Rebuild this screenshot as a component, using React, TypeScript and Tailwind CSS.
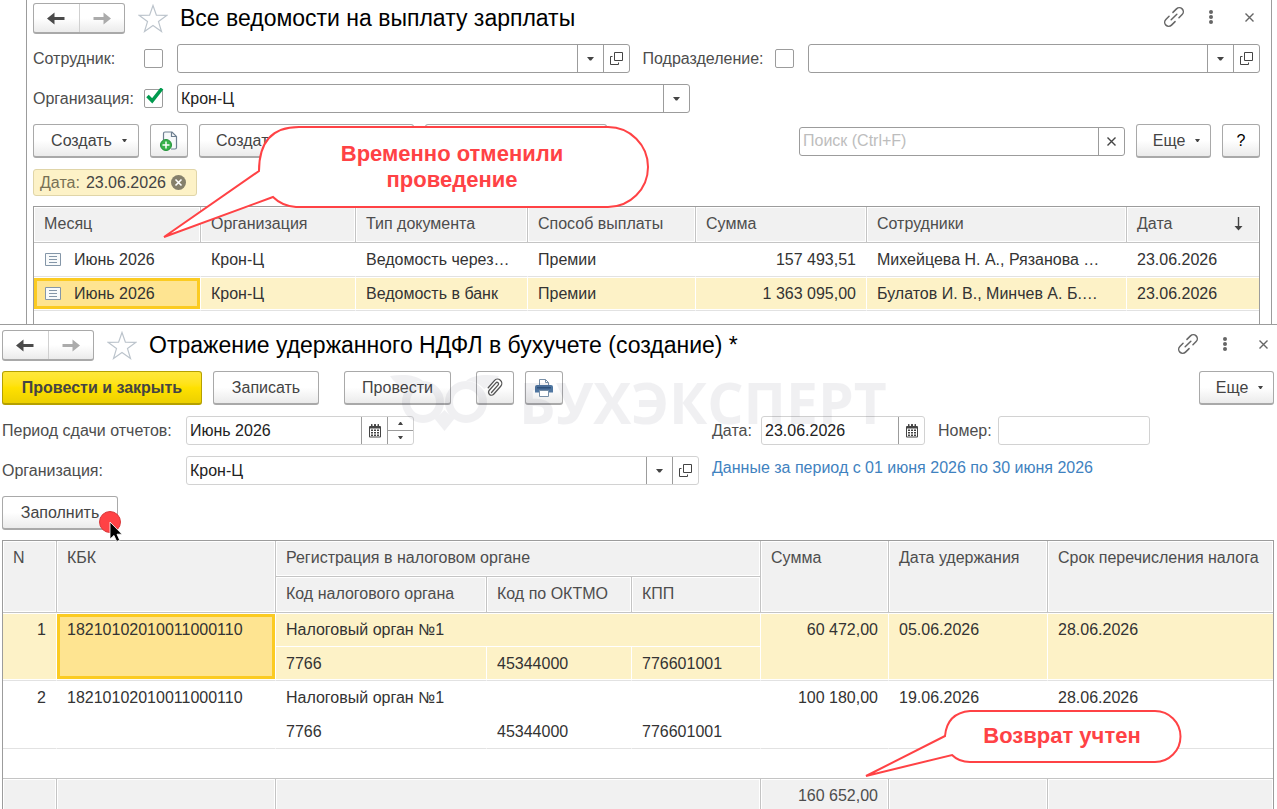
import { ReactNode } from 'react'
import clsx from 'clsx'

const BUTTON =
  'flex items-center justify-center rounded-[3px] border border-[#a9a9a9] border-b-2 bg-gradient-to-b from-white from-50% to-[#ebebeb] text-[#444]'

const HEAD =
  'h-9 overflow-hidden whitespace-nowrap border-r border-b border-[#c4c4c4] bg-[#f1f1f1] p-0 px-[10px] text-left align-top font-normal leading-[34px] text-[#4d4d4d] shadow-[inset_0_0_0_1px_#fff]'

const CELL =
  'h-[34px] overflow-hidden whitespace-nowrap border-r border-r-white border-b border-b-[#e2e2e2] p-0 px-[10px] align-top leading-[33px]'

const MARKED = 'bg-[#fdf2c7] shadow-[inset_0_1px_#fff,inset_0_-1px_#fff]'
const FOCUSED =
  'bg-[#fee491] shadow-[inset_0_1px_#fff,inset_0_-1px_#fff,inset_3px_0_#fbcb22,inset_-3px_0_#fbcb22,inset_0_4px_#fbcb22,inset_0_-4px_#fbcb22]'

function Caret() {
  return (
    <svg width="7" height="4" viewBox="0 0 7 4" fill="#444">
      <path d="M0 0h7L4.2 3.6H2.8z" />
    </svg>
  )
}

function SmallCaret({ up }: { up?: boolean }) {
  return (
    <svg width="5" height="3" viewBox="0 0 5 3" fill="#444">
      <path d={up ? 'M0 3h5L3 0H2z' : 'M0 0h5L3 3H2z'} />
    </svg>
  )
}

function OpenIcon() {
  return (
    <svg width="13" height="13" viewBox="0 0 13 13" fill="none" stroke="#444">
      <path d="M4.5 0.5h8v8h-8zM2.5 4.5h-2v8h8v-2" />
    </svg>
  )
}

function CalendarIcon() {
  return (
    <svg width="12" height="14" viewBox="0 0 12 14" fill="#444">
      <path d="M1 2h1V.5a.5.5 0 0 1 .5-.5h.5a.5.5 0 0 1 .5.5V2h1.500V.5a.5.5 0 0 1 .5-.5h1a.5.5 0 0 1 .5.5V2H8.500V.5A.5.5 0 0 1 9 0h.5a.5.5 0 0 1 .5.5V2h1a1 1 0 0 1 1 1v9.500a1 1 0 0 1-1 1H1a1 1 0 0 1-1-1V3a1 1 0 0 1 1-1z" />
      <path d="M1 4.500h10v8H1z" fill="#fff" />
      <path d="M2 5.500h2v1.500H2zM5 5.500h2v1.500H5zM8 5.500h2v1.500H8zM2 8h2v1.500H2zM5 8h2v1.500H5zM8 8h2v1.500H8zM2 10.500h2V12H2zM5 10.500h2V12H5zM8 10.500h2V12H8z" />
    </svg>
  )
}

function CrossIcon({ color = '#666' }: { color?: string }) {
  return (
    <svg width="9" height="9" viewBox="0 0 9 9" fill="none" stroke={color} strokeWidth="1.4">
      <path d="M0.500 0.500l8 8M8.500 0.500l-8 8" />
    </svg>
  )
}

function DocIcon() {
  return (
    <svg width="16" height="13" viewBox="0 0 16 13" fill="none">
      <path d="M0.500 0.500h15v12H.5z" fill="#f8fafb" stroke="#8496a8" />
      <path d="M4 3.500h8M4 6.500h8M4 9.500h8" stroke="#8496a8" />
    </svg>
  )
}

function AddDocIcon() {
  return (
    <svg width="18" height="20" viewBox="0 0 18 20" fill="none">
      <path d="M3.500 9V2.500a1.500 1.500 0 0 1 1.500-1.500h7l4.500 4.500v11a1.500 1.500 0 0 1-1.500 1.500h-4" fill="#f7f9fa" stroke="#6d7f90" strokeWidth="1.200" />
      <path d="M11.500 1v4.500h4.500" stroke="#6d7f90" strokeWidth="1.200" />
      <circle cx="6" cy="14" r="5.500" fill="#39b34a" stroke="#23923a" />
      <path d="M6 10.500v7M2.500 14h7" stroke="#fff" strokeWidth="1.500" />
    </svg>
  )
}

function ClipIcon() {
  return (
    <svg width="18" height="20" viewBox="0 0 18 20" fill="none" stroke="#555" strokeWidth="1.300" strokeLinecap="round">
      <path d="M5.500 14.500l6.700-7.600a1.500 1.500 0 0 0-2.300-2L3.300 12.300a2.900 2.900 0 0 0 4.300 3.900l7.100-8a4.200 4.200 0 0 0-6.300-5.600L2.200 9.700" />
    </svg>
  )
}

function PrintIcon() {
  return (
    <svg width="18" height="18" viewBox="0 0 18 18" fill="none">
      <path d="M4.500 7V0.500h6l3 3V7" fill="#fff" stroke="#7990a8" />
      <path d="M10.500 0.500v3h3" stroke="#7990a8" />
      <path d="M2 6h14a2 2 0 0 1 2 2v5.500H0V8a2 2 0 0 1 2-2z" fill="#4f76a1" />
      <path d="M2 8h14v1.500H2z" fill="#2f5580" />
      <path d="M4.500 11.500h9v6h-9z" fill="#fff" stroke="#7990a8" />
    </svg>
  )
}

function Arrow({ left, color }: { left?: boolean; color: string }) {
  return (
    <svg width="18" height="13" viewBox="0 0 18 13" fill={color} className={clsx(!left && 'rotate-180')}>
      <path d="M0 6.500L7.500 0.500v4.500H17.500v3H7.500v4.500z" />
    </svg>
  )
}

function WindowTitle({ title }: { title: string }) {
  return (
    <header className="flex items-center pr-[6px]">
      <div className="flex h-[31px] w-[92px] rounded-[3px] border border-b-2 border-[#a9a9a9] bg-gradient-to-b from-white from-50% to-[#ebebeb]">
        <button className="flex flex-1 items-center justify-center border-r border-[#d0d0d0]" aria-label="Назад">
          <Arrow left color="#4a4a4a" />
        </button>
        <button className="flex flex-1 items-center justify-center" aria-label="Вперед">
          <Arrow color="#ababab" />
        </button>
      </div>
      <button className="ml-[13px]" aria-label="В избранное">
        <svg width="30" height="29" viewBox="0 0 30 29" fill="none" stroke="#bcc4cc" strokeWidth="1.200">
          <path d="M15 1.500l3.400 9.700 10.300.2-8.200 6.200 3 9.900-8.500-5.900-8.500 5.900 3-9.900-8.200-6.200 10.300-.2z" />
        </svg>
      </button>
      <h1 className="ml-[12px] flex-1 whitespace-nowrap pb-[2px] text-[23px] leading-7 text-black">{title}</h1>
      <div className="flex items-center pb-[3px]">
        <button aria-label="Получить ссылку">
          <svg width="22" height="22" viewBox="0 0 22 22" fill="none" stroke="#666" strokeWidth="1.500" strokeLinecap="round">
            <g transform="rotate(-45 11 11)">
              <path d="M8.500 15H3.500a4 4 0 0 1 0-8h4.500M13.500 7h5a4 4 0 0 1 0 8h-4.500M7 11h8" />
            </g>
          </svg>
        </button>
        <button className="ml-[23px]" aria-label="Меню">
          <svg width="6" height="16" viewBox="0 0 6 16" fill="#666">
            <circle cx="3" cy="3" r="2" />
            <circle cx="3" cy="8" r="2" />
            <circle cx="3" cy="13" r="2" />
          </svg>
        </button>
        <button className="ml-[31px]" aria-label="Закрыть">
          <CrossIcon />
        </button>
      </div>
    </header>
  )
}

interface FieldProps {
  id: string
  label: string
  value?: string
  placeholder?: string
  light?: boolean
  className: string
  children?: ReactNode
}

function Field({ id, label, value, placeholder, light, className, children }: FieldProps) {
  return (
    <div
      className={clsx(
        'flex h-[29px] rounded-[3px] border bg-white',
        light ? 'border-[#d2d2d2]' : 'border-[#9c9c9c]',
        className,
      )}
    >
      <input
        id={id}
        aria-label={label}
        defaultValue={value}
        placeholder={placeholder}
        className="w-0 min-w-0 flex-1 bg-transparent px-[3px] text-base text-[#222] outline-none placeholder:text-[#bdbdbd]"
      />
      {children}
    </div>
  )
}

function FieldButton({ label, children }: { label: string; children: ReactNode }) {
  return (
    <button
      aria-label={label}
      className="flex w-[26px] items-center justify-center border-l border-[#9c9c9c]"
    >
      {children}
    </button>
  )
}

function Check({ label, checked }: { label: string; checked?: boolean }) {
  return (
    <span className="relative flex">
      <input
        type="checkbox"
        aria-label={label}
        defaultChecked={checked}
        className="peer h-[19px] w-[19px] appearance-none rounded-[2px] border border-[#9c9c9c] bg-white"
      />
      <svg
        className="pointer-events-none absolute -top-px left-[2px] hidden peer-checked:block"
        width="18"
        height="17"
        viewBox="0 0 18 17"
        fill="none"
        stroke="#009a4e"
        strokeWidth="3.500"
      >
        <path d="M1.500 8l4.700 4.800L16 0.500" />
      </svg>
    </span>
  )
}

const payments = [
  { type: 'Ведомость через…', sum: '157 493,51', people: 'Михейцева Н. А., Рязанова …' },
  { type: 'Ведомость в банк', sum: '1 363 095,00', people: 'Булатов И. В., Минчев А. Б.…' },
]

const taxes = [
  { n: 1, sum: '60 472,00', date: '05.06.2026' },
  { n: 2, sum: '100 180,00', date: '19.06.2026' },
]

function PaymentsWindow() {
  return (
    <section className="ml-[26px] mr-[5px] border-x border-[#9c9c9c] pl-[6px] pr-[11px] pt-[3px]">
      <WindowTitle title="Все ведомости на выплату зарплаты" />

      <div className="mt-[10px] flex items-center text-[#4d4d4d]">
        <label htmlFor="employee" className="w-[111px]">Сотрудник:</label>
        <Check label="Отбор по сотруднику" />
        <Field id="employee" label="Сотрудник" className="ml-[14px] flex-1">
          <FieldButton label="Выбрать"><Caret /></FieldButton>
          <FieldButton label="Открыть"><OpenIcon /></FieldButton>
        </Field>
        <label htmlFor="department" className="ml-[13px] w-[132px]">Подразделение:</label>
        <Check label="Отбор по подразделению" />
        <Field id="department" label="Подразделение" className="ml-[14px] flex-1">
          <FieldButton label="Выбрать"><Caret /></FieldButton>
          <FieldButton label="Открыть"><OpenIcon /></FieldButton>
        </Field>
      </div>

      <div className="mt-[11px] flex items-center text-[#4d4d4d]">
        <label htmlFor="company" className="w-[111px]">Организация:</label>
        <Check label="Отбор по организации" checked />
        <Field id="company" label="Организация" value="Крон-Ц" className="ml-[14px] w-[513px]">
          <FieldButton label="Выбрать"><Caret /></FieldButton>
        </Field>
      </div>

      <div className="mt-[11px] flex items-center">
        <button className={clsx(BUTTON, 'h-[34px] w-[106px] gap-[10px] pl-[6px]')}>
          Создать <SmallCaret />
        </button>
        <button className={clsx(BUTTON, 'ml-[11px] h-[34px] w-[38px]')} aria-label="Создать копированием">
          <AddDocIcon />
        </button>
        <button className={clsx(BUTTON, 'ml-[11px] h-[34px] w-[215px] justify-start! pl-4')}>Создать</button>
        <button className={clsx(BUTTON, 'ml-[11px] h-[34px] w-[182px]')} aria-label="Печать" />
        <Field id="search" label="Поиск" placeholder="Поиск (Ctrl+F)" className="ml-auto w-[326px]">
          <FieldButton label="Очистить"><CrossIcon color="#444" /></FieldButton>
        </Field>
        <button className={clsx(BUTTON, 'ml-[11px] h-[34px] w-[75px] gap-[10px] pl-[6px]')}>
          Еще <SmallCaret />
        </button>
        <button className={clsx(BUTTON, 'ml-[11px] h-[34px] w-[38px] text-black!')}>?</button>
      </div>

      <div className="mt-[11px] flex h-[27px] w-[164px] items-center rounded-[3px] border border-[#e0d5a8] bg-[#fdf2c7] pl-[6px] text-[#444]">
        <span className="text-[#777055]">Дата:</span>
        <span className="ml-[6px]">23.06.2026</span>
        <button className="ml-[5px]" aria-label="Убрать отбор">
          <svg width="15" height="15" viewBox="0 0 15 15">
            <circle cx="7.500" cy="7.500" r="7.500" fill="#85806c" />
            <path d="M4.500 4.500l6 6M10.500 4.500l-6 6" stroke="#fff" strokeWidth="1.600" />
          </svg>
        </button>
      </div>

      <div className="mt-[10px] border-x border-t border-[#9c9c9c] pb-[13px]">
        <table className="w-full table-fixed border-separate border-spacing-0 text-[#333]">
          <colgroup>
            <col className="w-[167px]" />
            <col className="w-[155px]" />
            <col className="w-[172px]" />
            <col className="w-[168px]" />
            <col className="w-[171px]" />
            <col className="w-[260px]" />
            <col />
          </colgroup>
          <thead>
            <tr>
              <th className={HEAD}>Месяц</th>
              <th className={HEAD}>Организация</th>
              <th className={HEAD}>Тип документа</th>
              <th className={HEAD}>Способ выплаты</th>
              <th className={HEAD}>Сумма</th>
              <th className={HEAD}>Сотрудники</th>
              <th className={clsx(HEAD, 'border-r-0')}>
                <span className="flex h-[34px] items-center justify-between pr-[6px]">
                  Дата
                  <svg width="9" height="14" viewBox="0 0 9 14" fill="none">
                    <path d="M4.500 0v12" stroke="#444" strokeWidth="1.400" />
                    <path d="M0.500 9h8l-4 4.500z" fill="#444" />
                  </svg>
                </span>
              </th>
            </tr>
          </thead>
          <tbody>
            {payments.map((row, i) => {
              const cell = clsx(CELL, i === 1 && MARKED)
              return (
                <tr key={row.type}>
                  <td className={clsx(CELL, i === 1 && FOCUSED)}>
                    <span className="flex items-center">
                      <span className="pl-px"><DocIcon /></span>
                      <span className="ml-[13px]">Июнь 2026</span>
                    </span>
                  </td>
                  <td className={cell}>Крон-Ц</td>
                  <td className={cell}>{row.type}</td>
                  <td className={cell}>Премии</td>
                  <td className={clsx(cell, 'text-right')}>{row.sum}</td>
                  <td className={cell}>{row.people}</td>
                  <td className={clsx(cell, 'border-r-0')}>23.06.2026</td>
                </tr>
              )
            })}
          </tbody>
        </table>
      </div>
    </section>
  )
}

function TaxWindow() {
  return (
    <section className="border-t border-[#9c9c9c] pl-[2px] pr-[3px] pt-[5px]">
      <WindowTitle title="Отражение удержанного НДФЛ в бухучете (создание) *" />

      <div className="mt-[10px] flex items-center">
        <button className="h-[34px] w-[200px] rounded-[3px] border border-b-2 border-[#b5a000] bg-gradient-to-b from-[#ffe83a] via-[#ffe100] to-[#ecd000] font-bold text-[#444]">
          Провести и закрыть
        </button>
        <button className={clsx(BUTTON, 'ml-[11px] h-[34px] w-[106px]')}>Записать</button>
        <button className={clsx(BUTTON, 'ml-[25px] h-[34px] w-[107px]')}>Провести</button>
        <button className={clsx(BUTTON, 'ml-[25px] h-[34px] w-[38px]')} aria-label="Файлы">
          <ClipIcon />
        </button>
        <button className={clsx(BUTTON, 'ml-[11px] h-[34px] w-[38px]')} aria-label="Печать">
          <PrintIcon />
        </button>
        <button className={clsx(BUTTON, 'ml-auto h-[34px] w-[75px] gap-[10px] pl-[6px]')}>
          Еще <SmallCaret />
        </button>
      </div>

      <div className="mt-[11px] flex items-center text-[#4d4d4d]">
        <label htmlFor="period" className="w-[184px] whitespace-nowrap">Период сдачи отчетов:</label>
        <Field id="period" label="Период сдачи отчетов" value="Июнь 2026" light className="w-[228px]">
          <FieldButton label="Календарь"><CalendarIcon /></FieldButton>
          <span className="flex w-[26px] flex-col border-l border-[#9c9c9c]">
            <button className="flex flex-1 items-center justify-center border-b border-[#9c9c9c]" aria-label="Больше">
              <SmallCaret up />
            </button>
            <button className="flex flex-1 items-center justify-center" aria-label="Меньше">
              <SmallCaret />
            </button>
          </span>
        </Field>
        <label htmlFor="date" className="ml-[298px] w-[49px]">Дата:</label>
        <Field id="date" label="Дата" value="23.06.2026" light className="w-[164px]">
          <FieldButton label="Календарь"><CalendarIcon /></FieldButton>
        </Field>
        <label htmlFor="number" className="ml-[13px] w-[60px]">Номер:</label>
        <Field id="number" label="Номер" light className="w-[152px]" />
      </div>

      <div className="mt-[11px] flex items-center text-[#4d4d4d]">
        <label htmlFor="owner" className="w-[184px]">Организация:</label>
        <Field id="owner" label="Организация" value="Крон-Ц" light className="w-[513px]">
          <FieldButton label="Выбрать"><Caret /></FieldButton>
          <FieldButton label="Открыть"><OpenIcon /></FieldButton>
        </Field>
        <a href="#period" className="ml-[13px] self-start whitespace-nowrap text-[#3f82c0]">
          Данные за период с 01 июня 2026 по 30 июня 2026
        </a>
      </div>

      <div className="relative mt-[11px] w-[116px]">
        <button className={clsx(BUTTON, 'h-[34px] w-full')}>Заполнить</button>
        <svg className="pointer-events-none absolute left-[97px] top-[15px]" width="24" height="32" viewBox="0 0 24 32">
          <circle cx="11" cy="11" r="10.500" fill="#ff4245" stroke="#d93a3c" />
          <path d="M11 11v17l4-3.600 2.700 6.100 3-1.300-2.700-6h5z" fill="#000" stroke="#fff" strokeWidth="0.800" />
        </svg>
      </div>

      <div className="mt-[10px] border-x border-t border-[#9c9c9c]">
        <table className="w-full table-fixed border-separate border-spacing-0 text-[#333]">
          <colgroup>
            <col className="w-[54px]" />
            <col className="w-[219px]" />
            <col className="w-[211px]" />
            <col className="w-[145px]" />
            <col className="w-[129px]" />
            <col className="w-[128px]" />
            <col className="w-[159px]" />
            <col />
          </colgroup>
          <thead>
            <tr>
              <th rowSpan={2} className={HEAD}>N</th>
              <th rowSpan={2} className={HEAD}>КБК</th>
              <th colSpan={3} className={HEAD}>Регистрация в налоговом органе</th>
              <th rowSpan={2} className={HEAD}>Сумма</th>
              <th rowSpan={2} className={HEAD}>Дата удержания</th>
              <th rowSpan={2} className={clsx(HEAD, 'border-r-0 pr-0')}>Срок перечисления налога</th>
            </tr>
            <tr>
              <th className={HEAD}>Код налогового органа</th>
              <th className={HEAD}>Код по ОКТМО</th>
              <th className={HEAD}>КПП</th>
            </tr>
          </thead>
          {taxes.map((row, i) => {
            const marked = i === 0
            const cell = clsx(CELL, marked && MARKED)
            return (
              <tbody key={row.n}>
                <tr>
                  <td rowSpan={2} className={clsx(cell, 'text-right')}>{row.n}</td>
                  <td rowSpan={2} className={clsx(CELL, marked && FOCUSED)}>18210102010011000110</td>
                  <td colSpan={3} className={clsx(CELL, 'border-b-white!', marked && 'bg-[#fdf2c7] shadow-[inset_0_1px_#fff]')}>
                    Налоговый орган №1
                  </td>
                  <td rowSpan={2} className={clsx(cell, 'text-right')}>{row.sum}</td>
                  <td rowSpan={2} className={cell}>{row.date}</td>
                  <td rowSpan={2} className={clsx(cell, 'border-r-0')}>28.06.2026</td>
                </tr>
                <tr>
                  {['7766', '45344000', '776601001'].map((code) => (
                    <td key={code} className={clsx(CELL, marked && 'bg-[#fdf2c7] shadow-[inset_0_-1px_#fff]')}>
                      {code}
                    </td>
                  ))}
                </tr>
              </tbody>
            )
          })}
          <tfoot>
            <tr>
              <td colSpan={8} className="h-[30px] border-b border-[#c4c4c4] p-0" />
            </tr>
            <tr>
              <td className={HEAD} />
              <td className={HEAD} />
              <td colSpan={3} className={HEAD} />
              <td className={clsx(HEAD, 'text-right!')}>160 652,00</td>
              <td className={HEAD} />
              <td className={clsx(HEAD, 'border-r-0')} />
            </tr>
          </tfoot>
        </table>
      </div>
    </section>
  )
}

function Watermark() {
  return (
    <div className="pointer-events-none absolute left-[388px] top-[370px] flex text-[#14143c] opacity-[0.06]">
      <svg width="114" height="64" viewBox="0 0 114 64" fill="none" stroke="currentColor">
        <circle cx="35" cy="32" r="17" strokeWidth="8" />
        <circle cx="78" cy="32" r="17" strokeWidth="8" />
        <g fill="currentColor" stroke="none">
          <path d="M2 6c14-2 26-1 33 5-8 0-14 3-18 8C11 16 6 12 2 6z" />
          <path d="M111 6c-14-2-26-1-33 5 8 0 14 3 18 8 6-3 11-7 15-13z" />
          <path d="M46 48c4-2 8-5 10.500-8 2.500 3 6.500 6 10.500 8L56.500 61z" />
        </g>
      </svg>
      <span className="ml-[17px] font-['Open_Sans',sans-serif] text-[57px] font-bold leading-[64px]">БУХЭКСПЕРТ</span>
    </div>
  )
}

export default function App() {
  return (
    <div className="relative h-screen overflow-hidden bg-white font-['Liberation_Sans',Arial,sans-serif] text-base">
      <PaymentsWindow />
      <TaxWindow />
      <Watermark />

      <div className="pointer-events-none absolute left-[162px] top-[125px] h-[114px] w-[488px]">
        <svg className="absolute inset-0" width="488" height="114" viewBox="0 0 488 114" fill="#fff" stroke="#ff4245" strokeWidth="2">
          <path d="M137 2H446a40 40 0 0 1 0 80H134Q120 81 111 72L2 112 97 46Q97 2 137 2z" />
        </svg>
        <p className="relative ml-[92px] pt-[16px] text-center text-[22px] font-bold leading-[26px] text-[#ff4245]">
          Временно отменили
          <br />
          проведение
        </p>
      </div>

      <div className="pointer-events-none absolute left-[864px] top-[709px] h-[70px] w-[318px]">
        <svg className="absolute inset-0" width="320" height="70" viewBox="0 0 320 70" fill="#fff" stroke="#ff4245" strokeWidth="2">
          <path d="M106 2H291a25 25 0 0 1 0 51H106Q95 53 88 46L2 67 81 27Q83 4 106 2z" />
        </svg>
        <p className="relative ml-[78px] pt-[14px] text-center text-[22px] font-bold leading-[26px] text-[#ff4245]">
          Возврат учтен
        </p>
      </div>
    </div>
  )
}
